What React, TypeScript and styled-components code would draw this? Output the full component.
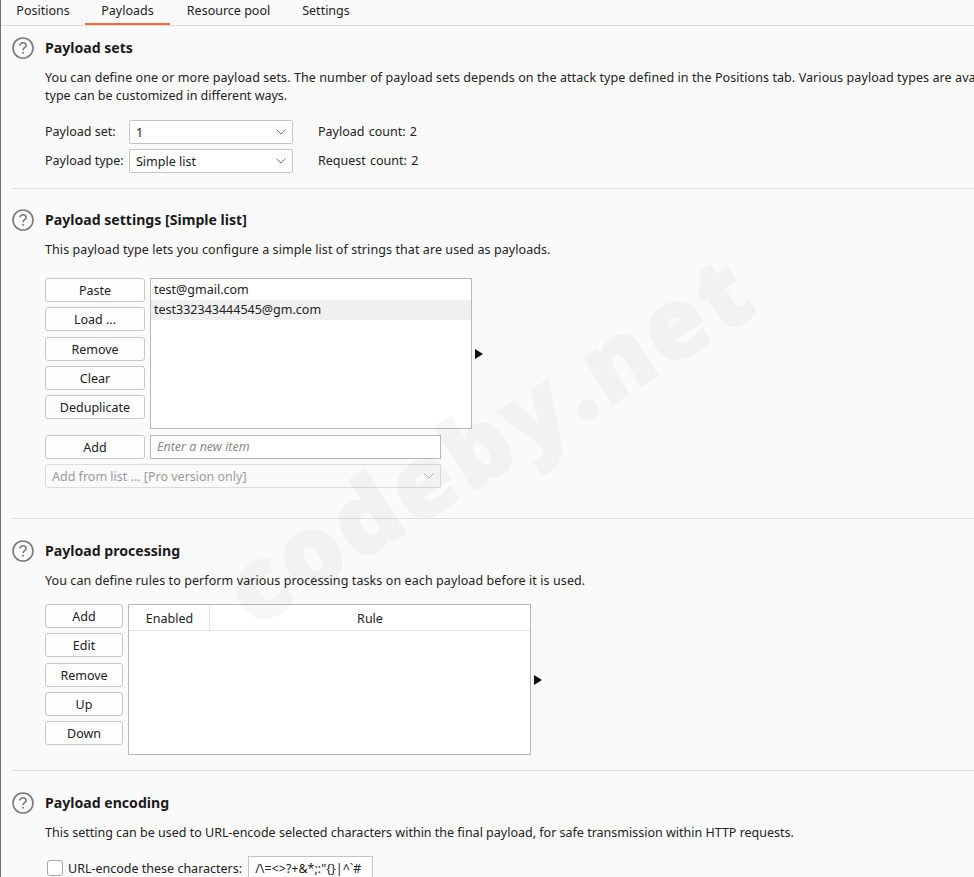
import styled, { createGlobalStyle } from "styled-components";

const GlobalStyle = createGlobalStyle`
  html, body {
    margin: 0;
    padding: 0;
    background: #fafafa;
  }
  * {
    box-sizing: border-box;
  }
`;

const Page = styled.div`
  position: relative;
  width: 974px;
  height: 877px;
  overflow: hidden;
  background: #fafafa;
  border-left: 1px solid #707070;
  color: #222;
  font-family: "Noto Sans", "Open Sans", sans-serif;
  font-size: 12.5px;
  line-height: 18px;
`;

const Tabs = styled.div`
  display: flex;
  height: 26px;
  border-bottom: 1px solid #dcdcdc;
`;

const Tab = styled.div<{ $active?: boolean; $width: number }>`
  width: ${({ $width }) => $width}px;
  height: 25px;
  padding-bottom: 1px;
  display: flex;
  align-items: center;
  justify-content: center;
  border-bottom: 2px solid ${({ $active }) => ($active ? "#ff6633" : "transparent")};
`;

const Content = styled.div`
  padding-left: 10px;
`;

const Section = styled.section<{ $top: number; $bottom: number; $last?: boolean }>`
  padding: ${({ $top }) => $top}px 0 ${({ $bottom }) => $bottom}px;
  border-bottom: ${({ $last }) => ($last ? "none" : "1px solid #dddddd")};
`;

const Header = styled.div`
  display: flex;
  align-items: center;
  height: 22px;
  padding-left: 1px;
  gap: 11px;
`;

const Title = styled.h2`
  margin: 0;
  font-size: 14.1px;
  font-weight: 700;
  color: #1a1a1a;
`;

const Body = styled.div`
  padding-left: 34px;
`;

const Description = styled.p`
  margin: 10px 0 0;
  white-space: nowrap;
`;

const DescriptionLine = styled.span<{ $spacing?: number }>`
  display: block;
  letter-spacing: ${({ $spacing }) => $spacing ?? 0}px;
`;

const FormRows = styled.div`
  display: grid;
  grid-template-columns: 84px 164px auto;
  grid-auto-rows: 24px;
  row-gap: 5px;
  align-items: center;
  margin-top: 15px;
`;

const Count = styled.span`
  margin-left: 25px;
  word-spacing: 1px;
`;

const Select = styled.div<{ $width: number; $disabled?: boolean }>`
  width: ${({ $width }) => $width}px;
  height: 24px;
  display: flex;
  align-items: center;
  justify-content: space-between;
  padding: 1px 5px 0 6px;
  background: ${({ $disabled }) => ($disabled ? "#fafafa" : "#ffffff")};
  color: ${({ $disabled }) => ($disabled ? "#9a9a9a" : "#222")};
  border: 1px solid ${({ $disabled }) => ($disabled ? "#dcdcdc" : "#c4c4c4")};
  border-radius: 2px;
`;

const Editor = styled.div`
  display: flex;
  gap: 5px;
  margin-top: 19px;
`;

const ButtonColumn = styled.div<{ $width: number }>`
  display: flex;
  flex-direction: column;
  gap: 5.25px;
  width: ${({ $width }) => $width}px;
  flex-shrink: 0;
`;

const Button = styled.button`
  height: 24px;
  padding: 2px 0 0;
  background: #fdfdfd;
  border: 1px solid #c8c8c8;
  border-radius: 3px;
  color: #222;
  font: inherit;
`;

const ListBox = styled.div`
  width: 322px;
  height: 151px;
  padding-top: 1px;
  background: #ffffff;
  border: 1px solid #b8b8b8;
`;

const ListItem = styled.div<{ $selected?: boolean }>`
  height: 20px;
  padding-left: 3px;
  line-height: 19px;
  font-size: 12.5px;
  background: ${({ $selected }) => ($selected ? "#f0f0f0" : "transparent")};
`;

const Expander = styled.span`
  align-self: center;
  width: 0;
  height: 0;
  margin-left: -2px;
  border-left: 8px solid #111;
  border-top: 5px solid transparent;
  border-bottom: 5px solid transparent;
`;

const AddRow = styled.div`
  display: flex;
  gap: 5px;
  margin-top: 6px;
`;

const AddButton = styled(Button)`
  width: 100px;
`;

const ItemInput = styled.div`
  width: 291px;
  height: 24px;
  padding-left: 6px;
  display: flex;
  align-items: center;
  background: #ffffff;
  border: 1px solid #b8b8b8;
  color: #8a8a8a;
  font-style: italic;
`;

const ListSelectRow = styled.div`
  margin-top: 5px;
`;

const RuleEditor = styled(Editor)`
  margin-top: 14px;
`;

const RuleTable = styled.div`
  width: 403px;
  height: 151px;
  background: #ffffff;
  border: 1px solid #b8b8b8;
`;

const TableHead = styled.div`
  display: flex;
  height: 26px;
  border-bottom: 1px solid #e4e4e4;
`;

const HeadCell = styled.div<{ $width?: number }>`
  display: flex;
  align-items: center;
  justify-content: center;
  padding: 2px 0 0 ${({ $width }) => ($width ? "1px" : "0")};
  width: ${({ $width }) => ($width ? `${$width}px` : "auto")};
  flex: ${({ $width }) => ($width ? "none" : 1)};
  border-right: ${({ $width }) => ($width ? "1px solid #e4e4e4" : "none")};
`;

const EncodeRow = styled.div`
  display: flex;
  align-items: center;
  margin-top: 14px;
  padding-left: 2px;
`;

const CheckBox = styled.span`
  width: 16px;
  height: 16px;
  margin-right: 5px;
  background: #ffffff;
  border: 1px solid #a8a8a8;
  border-radius: 3px;
`;

const EncodeLabel = styled.span`
  padding-top: 1px;
`;

const CharsInput = styled.div`
  width: 125px;
  height: 24px;
  margin-left: 6px;
  padding: 1px 0 0 6px;
  display: flex;
  align-items: center;
  background: #ffffff;
  border: 1px solid #c4c4c4;
`;

const Watermark = styled.div`
  position: absolute;
  left: 186px;
  top: 388px;
  transform: rotate(-32deg);
  transform-origin: center;
  font-family: "Open Sans", "Noto Sans", sans-serif;
  font-size: 98px;
  line-height: 98px;
  font-weight: 800;
  letter-spacing: 4px;
  color: #000;
  -webkit-text-stroke: 2px #000;
  opacity: 0.028;
  white-space: nowrap;
  pointer-events: none;
`;

const HelpIcon = () => (
  <svg width="22" height="22" viewBox="0 0 22 22" fill="none">
    <circle cx="11" cy="11" r="10" stroke="#7a7a7a" strokeWidth="1.6" />
    <path
      d="M7.9 8.6C7.9 6.9 9.3 5.8 11 5.8C12.8 5.8 14.1 6.9 14.1 8.5C14.1 10.6 11 10.8 11 13.2"
      stroke="#7a7a7a"
      strokeWidth="1.6"
    />
    <circle cx="11" cy="15.8" r="1" fill="#7a7a7a" />
  </svg>
);

const Chevron = ({ color = "#707070" }: { color?: string }) => (
  <svg width="12" height="8" viewBox="0 0 12 8" fill="none">
    <path d="M1.5 0.5L6 5L10.5 0.5" stroke={color} strokeWidth="1" />
  </svg>
);

const SectionHeader = ({ title }: { title: string }) => (
  <Header>
    <HelpIcon />
    <Title>{title}</Title>
  </Header>
);

export default function App() {
  return (
    <>
      <GlobalStyle />
      <Page>
        <Tabs>
          <Tab $width={84}>Positions</Tab>
          <Tab $width={85} $active>
            Payloads
          </Tab>
          <Tab $width={117}>Resource pool</Tab>
          <Tab $width={78}>Settings</Tab>
        </Tabs>
        <Content>
          <Section $top={11} $bottom={15}>
            <SectionHeader title="Payload sets" />
            <Body>
              <Description>
                <DescriptionLine $spacing={0.09}>
                  You can define one or more payload sets. The number of payload sets depends on the
                  attack type defined in the Positions tab. Various payload types are available for
                  each payload set, and each payload
                </DescriptionLine>
                <DescriptionLine>type can be customized in different ways.</DescriptionLine>
              </Description>
              <FormRows>
                <span>Payload set:</span>
                <Select $width={164}>
                  1
                  <Chevron />
                </Select>
                <Count>Payload count: 2</Count>
                <span>Payload type:</span>
                <Select $width={164}>
                  Simple list
                  <Chevron />
                </Select>
                <Count>Request count: 2</Count>
              </FormRows>
            </Body>
          </Section>
          <Section $top={20} $bottom={30}>
            <SectionHeader title="Payload settings [Simple list]" />
            <Body>
              <Description>
                <DescriptionLine $spacing={0.08}>
                  This payload type lets you configure a simple list of strings that are used as
                  payloads.
                </DescriptionLine>
              </Description>
              <Editor>
                <ButtonColumn $width={100}>
                  <Button>Paste</Button>
                  <Button>Load ...</Button>
                  <Button>Remove</Button>
                  <Button>Clear</Button>
                  <Button>Deduplicate</Button>
                </ButtonColumn>
                <ListBox>
                  <ListItem>test@gmail.com</ListItem>
                  <ListItem $selected>test332343444545@gm.com</ListItem>
                </ListBox>
                <Expander />
              </Editor>
              <AddRow>
                <AddButton>Add</AddButton>
                <ItemInput>Enter a new item</ItemInput>
              </AddRow>
              <ListSelectRow>
                <Select $width={396} $disabled>
                  Add from list ... [Pro version only]
                  <Chevron color="#b0b0b0" />
                </Select>
              </ListSelectRow>
            </Body>
          </Section>
          <Section $top={21} $bottom={15}>
            <SectionHeader title="Payload processing" />
            <Body>
              <Description>
                <DescriptionLine $spacing={0.09}>
                  You can define rules to perform various processing tasks on each payload before it
                  is used.
                </DescriptionLine>
              </Description>
              <RuleEditor>
                <ButtonColumn $width={78}>
                  <Button>Add</Button>
                  <Button>Edit</Button>
                  <Button>Remove</Button>
                  <Button>Up</Button>
                  <Button>Down</Button>
                </ButtonColumn>
                <RuleTable>
                  <TableHead>
                    <HeadCell $width={81}>Enabled</HeadCell>
                    <HeadCell>Rule</HeadCell>
                  </TableHead>
                </RuleTable>
                <Expander />
              </RuleEditor>
            </Body>
          </Section>
          <Section $top={21} $bottom={0} $last>
            <SectionHeader title="Payload encoding" />
            <Body>
              <Description>
                <DescriptionLine>
                  This setting can be used to URL-encode selected characters within the final
                  payload, for safe transmission within HTTP requests.
                </DescriptionLine>
              </Description>
              <EncodeRow>
                <CheckBox />
                <EncodeLabel>URL-encode these characters:</EncodeLabel>
                <CharsInput>{"/\\=<>?+&*;:\"{}|^`#"}</CharsInput>
              </EncodeRow>
            </Body>
          </Section>
        </Content>
        <Watermark>codeby.net</Watermark>
      </Page>
    </>
  );
}
